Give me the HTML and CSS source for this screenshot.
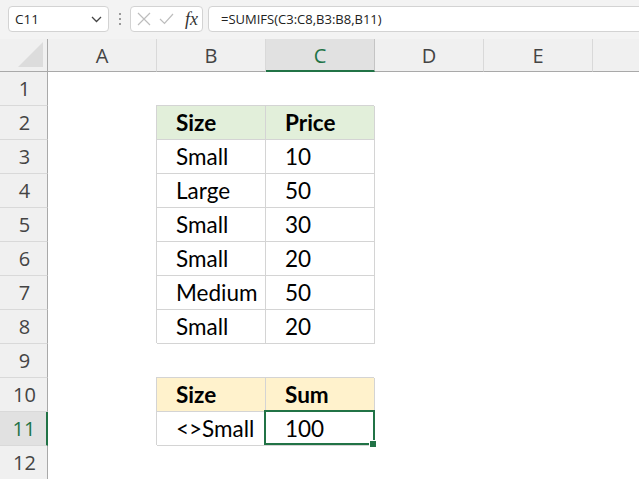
FILE: index.html
```html
<!DOCTYPE html>
<html>
<head>
<meta charset="utf-8">
<link rel="stylesheet" href="styles.css">
</head>
<body>
<div class="toolbar">
  <div class="namebox">
    <span class="nb-text">C11</span>
    <svg class="chev" width="11" height="7" viewBox="0 0 11 7"><polyline points="1,1 5.5,5.5 10,1" fill="none" stroke="#444" stroke-width="1.3"/></svg>
  </div>
  <div class="dots"><i></i><i></i><i></i></div>
  <div class="fxbox">
    <svg width="14" height="14" viewBox="0 0 14 14"><path d="M1 1 L13 13 M13 1 L1 13" stroke="#bdbdbd" stroke-width="1.2" fill="none"/></svg>
    <svg width="15" height="12" viewBox="0 0 15 12"><polyline points="1,6 5.5,10.5 14,1" stroke="#bdbdbd" stroke-width="1.2" fill="none"/></svg>
    <span class="fx">fx</span>
  </div>
  <div class="formula">=SUMIFS(C3:C8,B3:B8,B11)</div>
</div>
<div class="viewport">
<div class="sheet">
  <div class="corner"><svg width="26" height="26" viewBox="0 0 26 26"><polygon points="25,0 25,25 0,25" fill="#dcdcdc"/></svg></div>
  <div class="ch">A</div><div class="ch">B</div><div class="ch sel-col">C</div><div class="ch">D</div><div class="ch">E</div><div class="ch"></div>

  <div class="rh">1</div><div class="c"></div><div class="c"></div><div class="c"></div><div class="c"></div><div class="c"></div><div class="c"></div>
  <div class="rh">2</div><div class="c"></div><div class="c t hg">Size</div><div class="c t hg">Price</div><div class="c"></div><div class="c"></div><div class="c"></div>
  <div class="rh">3</div><div class="c"></div><div class="c t">Small</div><div class="c t">10</div><div class="c"></div><div class="c"></div><div class="c"></div>
  <div class="rh">4</div><div class="c"></div><div class="c t">Large</div><div class="c t">50</div><div class="c"></div><div class="c"></div><div class="c"></div>
  <div class="rh">5</div><div class="c"></div><div class="c t">Small</div><div class="c t">30</div><div class="c"></div><div class="c"></div><div class="c"></div>
  <div class="rh">6</div><div class="c"></div><div class="c t">Small</div><div class="c t">20</div><div class="c"></div><div class="c"></div><div class="c"></div>
  <div class="rh">7</div><div class="c"></div><div class="c t">Medium</div><div class="c t">50</div><div class="c"></div><div class="c"></div><div class="c"></div>
  <div class="rh">8</div><div class="c"></div><div class="c t">Small</div><div class="c t">20</div><div class="c"></div><div class="c"></div><div class="c"></div>
  <div class="rh">9</div><div class="c"></div><div class="c"></div><div class="c"></div><div class="c"></div><div class="c"></div><div class="c"></div>
  <div class="rh">10</div><div class="c"></div><div class="c t hy">Size</div><div class="c t hy">Sum</div><div class="c"></div><div class="c"></div><div class="c"></div>
  <div class="rh sel-row">11</div><div class="c"></div><div class="c t">&lt;&gt;Small</div><div class="c t active">100<span class="selbox"></span><span class="handle"></span></div><div class="c"></div><div class="c"></div><div class="c"></div>
  <div class="rh">12</div><div class="c"></div><div class="c"></div><div class="c"></div><div class="c"></div><div class="c"></div><div class="c"></div>
</div>
</div>
</body>
</html>
```
FILE: styles.css
```css
html, body {
  margin: 0;
  padding: 0;
  background: #ffffff;
  overflow: hidden;
  width: 639px;
  height: 479px;
}
* { box-sizing: border-box; }

.toolbar {
  height: 39px;
  width: 639px;
  overflow: hidden;
  background: #f3f3f3;
  display: flex;
  align-items: flex-start;
  padding: 6px 0 0 8px;
  font-family: "Open Sans", "Noto Sans", sans-serif;
}
.namebox {
  flex: none;
  width: 101px;
  height: 26px;
  background: #fff;
  border: 1px solid #d3d3d3;
  border-radius: 4px;
  display: flex;
  align-items: center;
  padding: 0 6px 0 6px;
  font-size: 13.5px;
  color: #222;
}
.nb-text { flex: 1; }
.chev { margin-top: 1px; }
.dots {
  flex: none;
  width: 21px;
  height: 26px;
  display: flex;
  flex-direction: column;
  align-items: center;
  justify-content: center;
  gap: 3px;
}
.dots i {
  display: block;
  width: 2px;
  height: 2px;
  background: #9a9a9a;
}
.fxbox {
  flex: none;
  width: 73px;
  height: 26px;
  background: #fff;
  border: 1px solid #d3d3d3;
  border-radius: 4px;
  display: flex;
  align-items: center;
  padding-left: 6px;
  gap: 8px;
}
.fx {
  font-family: "Liberation Serif", serif;
  font-style: italic;
  font-size: 18px;
  color: #333;
  margin-left: 3px;
  line-height: 1;
}
.formula {
  flex: none;
  width: 440px;
  margin-left: 5px;
  height: 26px;
  background: #fff;
  border: 1px solid #d3d3d3;
  border-radius: 4px;
  padding-left: 12px;
  font-size: 13px;
  line-height: 24px;
  color: #222;
  white-space: nowrap;
}

.viewport {
  width: 639px;
  height: 440px;
  overflow: hidden;
}
.sheet {
  display: grid;
  grid-template-columns: 48px repeat(6, 109px);
  grid-template-rows: 33px repeat(12, 34px);
  width: 702px;
}
.corner {
  background: #f0f0f0;
  border-right: 1px solid #a9a9a9;
  border-bottom: 1px solid #a9a9a9;
  display: flex;
  align-items: flex-end;
  justify-content: flex-end;
  padding: 0 3px 3px 0;
}
.ch {
  background: #f0f0f0;
  border-right: 1px solid #d9d9d9;
  border-bottom: 1px solid #a9a9a9;
  font-family: "Open Sans", "Noto Sans", sans-serif;
  font-size: 20px;
  color: #444;
  display: flex;
  align-items: center;
  justify-content: center;
}
.ch.sel-col {
  background: #e1e1e1;
  color: #217346;
  border-right-color: #c4c4c4;
  border-bottom: 2px solid #217346;
  padding-top: 1px;
}
.rh {
  background: #f0f0f0;
  border-right: 1px solid #a9a9a9;
  border-bottom: 1px solid #d9d9d9;
  font-family: "Open Sans", "Noto Sans", sans-serif;
  font-size: 20px;
  color: #444;
  display: flex;
  align-items: center;
  justify-content: center;
  padding-left: 2px;
}
.rh.sel-row {
  background: #e1e1e1;
  color: #217346;
  border-right: 2px solid #217346;
}
.c {
  background: #fff;
  font-family: "Lato", "Open Sans", sans-serif;
  font-size: 22.5px;
  color: #000;
  display: flex;
  align-items: center;
  padding-left: 19px;
  white-space: nowrap;
}
.t {
  border-right: 1px solid #d4d4d4;
  border-bottom: 1px solid #d4d4d4;
  box-shadow: -1px -1px 0 #d4d4d4;
}
.hg { background: #e2efda; font-weight: bold; }
.hy { background: #fff2cc; font-weight: bold; }
.active { position: relative; }
.selbox {
  position: absolute;
  left: -2px;
  top: -2px;
  right: -1px;
  bottom: 0;
  border: 2px solid #217346;
}
.handle {
  position: absolute;
  right: -2px;
  bottom: -2px;
  width: 6px;
  height: 6px;
  background: #217346;
  box-shadow: -1px -1px 0 #fff;
}
```
